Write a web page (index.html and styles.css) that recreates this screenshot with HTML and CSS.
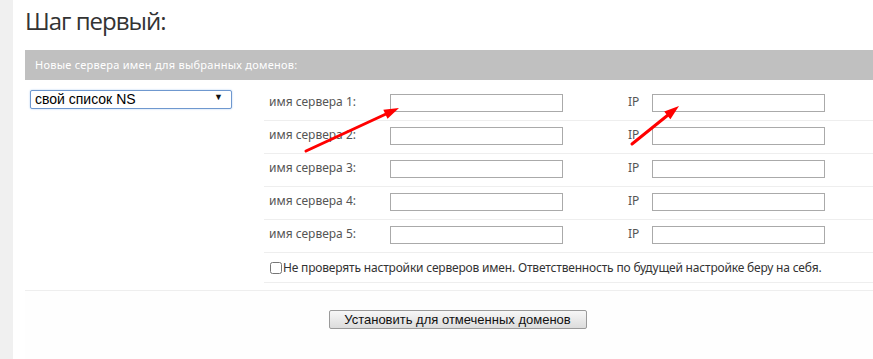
FILE: index.html
```html
<!DOCTYPE html>
<html lang="ru">
  <head>
    <meta charset="UTF-8" />
    <title>Шаг первый</title>
    <link rel="stylesheet" href="styles.css">
  </head>
  <body>
    <div class="page">
      <h1 class="title">Шаг первый:</h1>
      <div class="bar">Новые сервера имен для выбранных доменов:</div>

      <div class="form">
        <div class="side">
          <div class="select-box">
            <select class="ns-select">
              <option>свой список NS</option>
            </select>
            <span class="select-arrow">▼</span>
          </div>
        </div>
        <div class="fields">
          <div class="row">
            <span class="label">имя сервера 1:</span>
            <input class="field" type="text">
            <span class="ip-label">IP</span>
            <input class="field" type="text">
          </div>
          <div class="row">
            <span class="label">имя сервера 2:</span>
            <input class="field" type="text">
            <span class="ip-label">IP</span>
            <input class="field" type="text">
          </div>
          <div class="row">
            <span class="label">имя сервера 3:</span>
            <input class="field" type="text">
            <span class="ip-label">IP</span>
            <input class="field" type="text">
          </div>
          <div class="row">
            <span class="label">имя сервера 4:</span>
            <input class="field" type="text">
            <span class="ip-label">IP</span>
            <input class="field" type="text">
          </div>
          <div class="row">
            <span class="label">имя сервера 5:</span>
            <input class="field" type="text">
            <span class="ip-label">IP</span>
            <input class="field" type="text">
          </div>
          <label class="check-row">
            <input class="check" type="checkbox">Не проверять настройки серверов имен. Ответственность по будущей настройке беру на себя.
          </label>
        </div>
      </div>

      <div class="footer">
        <button class="submit-btn">Установить для отмеченных доменов</button>
      </div>
    </div>

    <!-- стрелки поверх формы -->
    <svg class="arrows" width="873" height="359" viewBox="0 0 873 359">
      <line x1="306" y1="151" x2="386" y2="114" stroke="#f00" stroke-width="3" stroke-linecap="round" />
      <polygon points="399,108 387.5,118.8 383.3,109.8" fill="#f00" />
      <line x1="632" y1="144" x2="668" y2="115" stroke="#f00" stroke-width="3" stroke-linecap="round" />
      <polygon points="679,106 670.4,119.3 664.2,111.5" fill="#f00" />
    </svg>
  </body>
</html>
```

FILE: styles.css
```css
/* Общие стили */
body {
  margin: 0;
  background-color: #f0f0f0;
  font-family: "Noto Sans", Arial, sans-serif;
  position: relative;
  overflow: hidden;
}

.page {
  margin-left: 13px;
  padding-left: 12px;
  background-color: #fff;
  min-height: 359px;
}

.title {
  margin: 0;
  height: 50px;
  padding-top: 4px;
  box-sizing: border-box;
  font-family: "Open Sans", sans-serif;
  font-weight: normal;
  font-size: 24px;
  line-height: 34px;
  letter-spacing: -1px;
  color: #333;
}

.bar {
  height: 30px;
  line-height: 30px;
  padding-left: 10px;
  background-color: #c0c0c0;
  color: #fff;
  font-size: 11px;
  letter-spacing: 0.25px;
}

.form {
  display: flex;
}

.side {
  width: 239px;
  box-sizing: border-box;
  padding: 7px 0 0 5px;
}

.select-box {
  position: relative;
  width: 202px;
  height: 19px;
}

.ns-select {
  appearance: none;
  width: 202px;
  height: 19px;
  margin: 0;
  padding: 0 0 0 4px;
  border: 1px solid #6f98cf;
  border-radius: 2px;
  box-shadow: 0 0 2px #a9c8ef;
  background-color: #fff;
  font-family: "Liberation Sans", Arial, sans-serif;
  font-weight: normal;
  font-size: 14px;
  color: #000;
}

.select-arrow {
  position: absolute;
  right: 9px;
  top: 3px;
  font-size: 9px;
  color: #111;
  pointer-events: none;
}

.fields {
  flex: 1;
  margin-top: 8px;
}

.row {
  display: flex;
  align-items: flex-start;
  height: 33px;
  padding: 6px 0 0 5px;
  box-sizing: border-box;
  border-bottom: 1px solid #eee;
}

.label {
  width: 121px;
  font-size: 12px;
  line-height: 16px;
  color: #555;
}

.field {
  width: 173px;
  height: 18px;
  margin: 0;
  padding: 0;
  box-sizing: border-box;
  border: 1px solid #aaa;
}

.ip-label {
  width: 24px;
  margin-left: 65px;
  font-size: 12px;
  line-height: 16px;
  color: #555;
}

.check-row {
  display: flex;
  align-items: center;
  height: 30px;
  padding-left: 5px;
  box-sizing: border-box;
  border-bottom: 1px solid #eee;
  font-size: 12px;
  letter-spacing: -0.18px;
  color: #333;
}

.check {
  width: 12px;
  height: 12px;
  margin: 0 1px 0 1px;
}

.footer {
  margin-top: 7px;
  border-top: 1px solid #eee;
  background-color: #fefefe;
  padding: 16px 0 0 17px;
  min-height: 60px;
  text-align: center;
}

.submit-btn {
  height: 19px;
  width: 258px;
  padding: 0;
  border: 1px solid #9a9a9a;
  border-radius: 2px;
  background: linear-gradient(#f7f7f7, #dcdcdc);
  font-family: "Liberation Sans", Arial, sans-serif;
  font-size: 13px;
  color: #111;
}

.arrows {
  position: absolute;
  left: 0;
  top: 0;
  pointer-events: none;
}
```
